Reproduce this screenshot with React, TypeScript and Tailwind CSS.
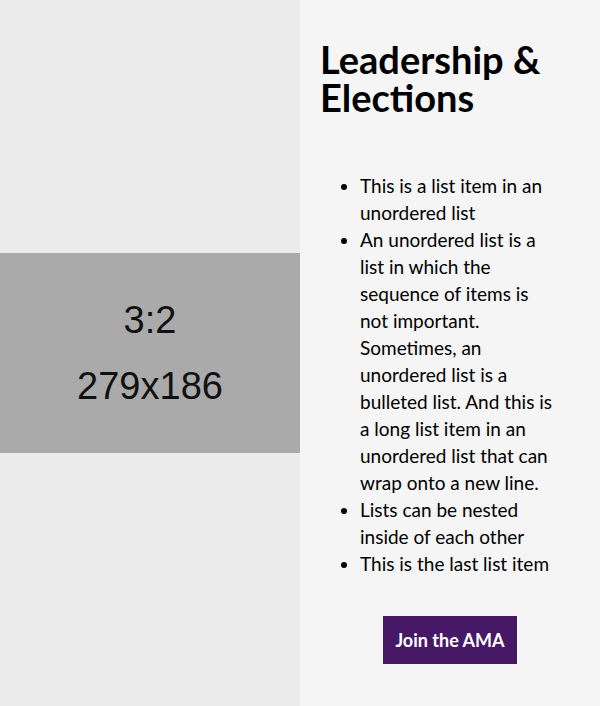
const items = [
  "This is a list item in an unordered list",
  "An unordered list is a list in which the sequence of items is not important. Sometimes, an unordered list is a bulleted list. And this is a long list item in an unordered list that can wrap onto a new line.",
  "Lists can be nested inside of each other",
  "This is the last list item",
];

export default function App() {
  return (
    <div className="flex h-[706px] w-[600px]">
      <div className="flex w-[300px] items-center bg-[#ececec]">
        <div className="flex h-[200px] w-full flex-col items-center justify-center gap-[22px] bg-[#aaaaaa] font-['Liberation_Sans',Arial,sans-serif] text-[38px] leading-[44px] text-[#111]">
          <span>3:2</span>
          <span>279x186</span>
        </div>
      </div>

      <div className="flex w-[300px] flex-col bg-[#f5f5f5] px-5 pt-[40px] font-['Lato',sans-serif] text-black">
        <h2 className="text-[38px] font-bold leading-[38px]">Leadership &amp; Elections</h2>

        <ul className="mt-[56px] list-disc pl-10 pr-5 text-[19px] leading-[27px]">
          {items.map((item) => (
            <li key={item}>{item}</li>
          ))}
        </ul>

        <div className="mt-[39px] flex justify-center">
          <button
            type="button"
            className="h-12 bg-[#461866] px-3 text-[18px] font-bold text-white"
          >
            Join the AMA
          </button>
        </div>
      </div>
    </div>
  );
}
